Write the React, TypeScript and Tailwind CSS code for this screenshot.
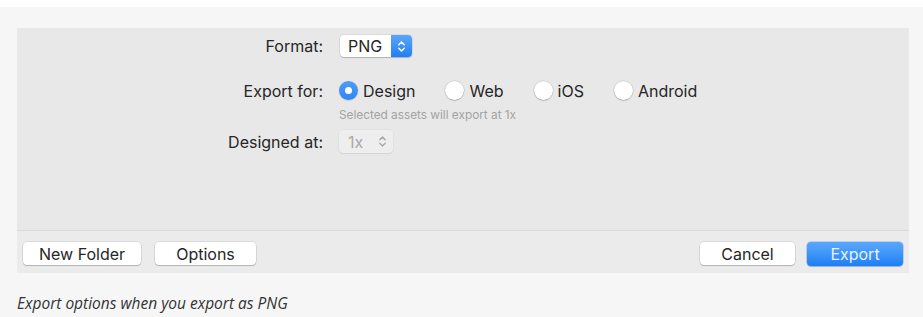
const ui = { fontFamily: 'Inter, "Liberation Sans", sans-serif' };
const caption = { fontFamily: '"Open Sans", "Liberation Sans", sans-serif' };

function Chevrons({ color, className }: { color: string; className?: string }) {
  return (
    <svg viewBox="0 0 10 16" className={className} fill="none" stroke={color} strokeWidth={1.6} strokeLinecap="round" strokeLinejoin="round">
      <path d="M2 6 L5 3 L8 6" />
      <path d="M2 10 L5 13 L8 10" />
    </svg>
  );
}

function Radio({ label, checked }: { label: string; checked?: boolean }) {
  return (
    <div className="flex items-center gap-[5px]">
      {checked ? (
        <span className="grid h-[19px] w-[19px] place-items-center rounded-full bg-gradient-to-b from-[#4d9cf8] to-[#2f86f4] shadow-[0_0.5px_1px_rgba(0,0,0,0.25)]">
          <span className="h-[7px] w-[7px] rounded-full bg-white" />
        </span>
      ) : (
        <span className="h-[19px] w-[19px] rounded-full bg-white shadow-[0_0_0_0.5px_rgba(0,0,0,0.18),0_1px_1px_rgba(0,0,0,0.15)]" />
      )}
      <span className="text-[16px] text-[#262626]">{label}</span>
    </div>
  );
}

function Button({ children, className = '' }: { children: React.ReactNode; className?: string }) {
  return (
    <button
      type="button"
      className={`flex h-[23px] items-center justify-center rounded-[4px] bg-white text-[16px] text-[#262626] shadow-[0_0_0_0.5px_rgba(0,0,0,0.15),0_1px_1px_rgba(0,0,0,0.18)] ${className}`}
    >
      {children}
    </button>
  );
}

export default function App() {
  return (
    <div className="h-[317px] w-[923px] bg-white pt-[7px]" style={ui}>
      <div className="h-[310px] bg-[#f6f6f6] pl-[17px] pt-[21px]">
        <div className="flex h-[245px] w-[892px] flex-col bg-[#e8e8e8]">
          <div className="flex h-[202px] flex-col pt-[7px]">
            <div className="flex h-[22px] items-center">
              <span className="w-[306px] text-right text-[16px] text-[#262626]">Format:</span>
              <div className="ml-[17px] flex h-[22px] w-[72px] overflow-hidden rounded-[4px] bg-white shadow-[0_0_0_0.5px_rgba(0,0,0,0.12),0_1px_1px_rgba(0,0,0,0.18)]">
                <span className="flex flex-1 items-center pl-[8px] text-[16px] text-[#262626]">PNG</span>
                <span className="grid w-[21px] place-items-center bg-gradient-to-b from-[#5aa6fa] to-[#1f7ff5]">
                  <Chevrons color="#fff" className="h-[15px] w-[9px]" />
                </span>
              </div>
            </div>

            <div className="mt-[24px] flex h-[19px] items-center">
              <span className="w-[306px] text-right text-[16px] text-[#262626]">Export for:</span>
              <div className="ml-[16px] flex items-center">
                <Radio label="Design" checked />
                <div className="ml-[30px]"><Radio label="Web" /></div>
                <div className="ml-[30px]"><Radio label="iOS" /></div>
                <div className="ml-[30px]"><Radio label="Android" /></div>
              </div>
            </div>

            <div className="mt-[9px] pl-[322px] text-[11.8px] leading-[13px] text-[#a3a3a3]">Selected assets will export at 1x</div>

            <div className="mt-[8px] flex h-[23px] items-center">
              <span className="w-[306px] text-right text-[16px] text-[#262626]">Designed at:</span>
              <div className="ml-[16px] flex h-[23px] w-[54px] items-center justify-between rounded-[4px] bg-[#eeeeee] pl-[9px] pr-[6px] shadow-[0_0_0_0.5px_rgba(0,0,0,0.06),0_1px_1px_rgba(0,0,0,0.06)]">
                <span className="text-[16px] text-[#a8a8a8]">1x</span>
                <Chevrons color="#a8a8a8" className="h-[15px] w-[9px]" />
              </div>
            </div>
          </div>

          <div className="flex h-[43px] items-start border-t border-[#d9d9d9] bg-[#ebebeb] px-[6px] pt-[11px]">
            <Button className="w-[118px]">New Folder</Button>
            <Button className="ml-[14px] w-[101px]">Options</Button>
            <div className="flex-1" />
            <Button className="w-[95px]">Cancel</Button>
            <button
              type="button"
              className="ml-[12px] flex h-[24px] w-[96px] items-center justify-center rounded-[4px] bg-gradient-to-b from-[#5aa8fb] to-[#1b7ff5] text-[16px] text-[#e9f2ff] shadow-[0_0_0_0.5px_rgba(0,90,220,0.4),0_1px_1px_rgba(0,0,0,0.15)]"
            >
              Export
            </button>
          </div>
        </div>

        <p className="mt-[19px] text-[15.5px] italic text-[#333]" style={caption}>
          Export options when you export as PNG
        </p>
      </div>
    </div>
  );
}
